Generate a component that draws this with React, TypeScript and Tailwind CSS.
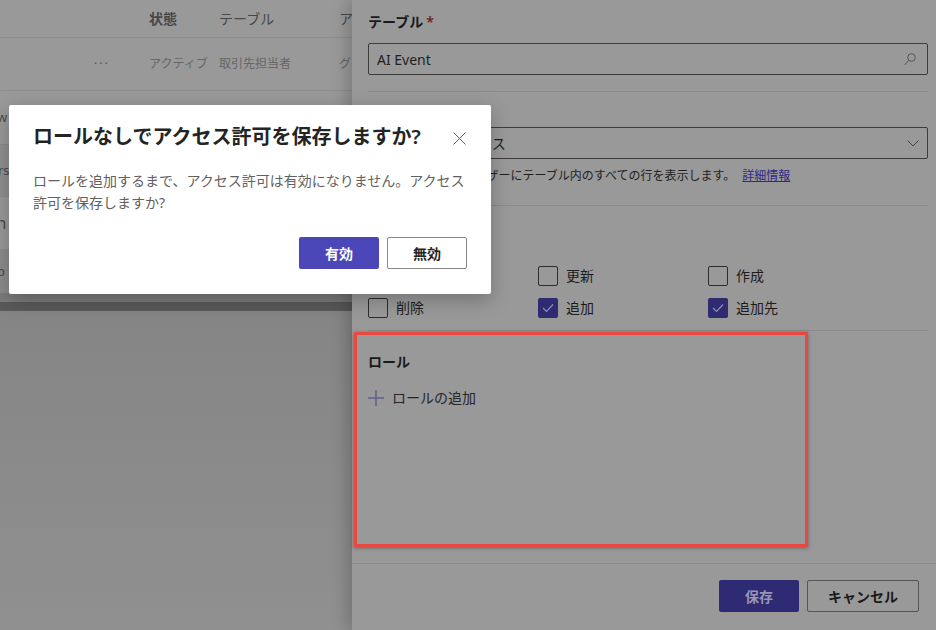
import React from "react";

// Screen behind the modal is drawn with its dimmed colours directly.

function Checkbox({ label, checked }: { label: string; checked?: boolean }) {
  return (
    <div className="flex items-center w-[170px]">
      <span
        className={`w-[20px] h-[20px] rounded-[2px] flex items-center justify-center ${
          checked ? "bg-[#2f2b70]" : "border border-[#2c2c2c]"
        }`}
      >
        {checked && (
          <svg width="12" height="10" viewBox="0 0 12 10">
            <polyline
              points="1,5 4.5,8.5 11,1.5"
              fill="none"
              stroke="#8f8db8"
              strokeWidth="1.2"
            />
          </svg>
        )}
      </span>
      <span className="ml-[8px] text-[14px] leading-[20px] text-[#1c1c1c]">
        {label}
      </span>
    </div>
  );
}

function BackPage() {
  return (
    <div className="w-[352px] h-full shrink-0 flex flex-col bg-[#999999] overflow-hidden">
      {/* Header */}
      <div className="h-[38px] flex items-center border-b border-[#8d8d8d] text-[14px] text-[#474747] shrink-0 whitespace-nowrap">
        <div className="w-[149px] shrink-0" />
        <div className="w-[70px] shrink-0 font-semibold">状態</div>
        <div className="w-[120px] shrink-0">テーブル</div>
        <div className="shrink-0">ア</div>
      </div>
      {/* Row */}
      <div className="h-[53px] flex items-center border-b border-[#8d8d8d] text-[12px] text-[#666666] shrink-0 whitespace-nowrap">
        <div className="w-[149px] shrink-0 pl-[94px] tracking-[2px] text-[#555]">···</div>
        <div className="w-[70px] shrink-0">アクティブ</div>
        <div className="w-[120px] shrink-0">取引先担当者</div>
        <div className="shrink-0">グ</div>
      </div>
      <div className="h-[53px] flex items-center text-[13px] text-[#4a4a4a] shrink-0">
        <span className="-ml-[3px]">w</span>
      </div>
      <div className="h-[53px] flex items-center bg-[#8f8f8f] border-y border-[#8a8a8a] text-[13px] text-[#4a4a4a] shrink-0">
        <span className="-ml-[2px]">rs</span>
      </div>
      <div className="h-[53px] flex items-center border-b border-[#8d8d8d] text-[17px] text-[#4a4a4a] shrink-0">
        <span className="-ml-[4px]">h</span>
      </div>
      <div className="h-[43px] flex items-center bg-[#8c8c8c] text-[13px] text-[#4a4a4a] shrink-0">
        <span className="-ml-[3px]">p</span>
      </div>
      <div className="h-[9px] bg-[#7b7b7b] shrink-0" />
      <div className="h-[9px] bg-[#5a5a5a] shrink-0" />
      <div className="flex-1 bg-linear-to-b from-[#858585] to-[#909090]" />
    </div>
  );
}

function SidePanel() {
  return (
    <div className="flex-1 h-full bg-[#999999] flex flex-col shadow-[-6px_0_14px_rgba(0,0,0,0.18)] z-0">
      <div className="pl-[16px] pr-[8px] pt-[12px] flex flex-col">
        <div className="text-[14px] leading-[20px] font-semibold text-[#1a1a1a]">
          テーブル<span className="ml-[3px] text-[#6e1f22]">*</span>
        </div>
        <div className="mt-[11px] h-[32px] border border-[#3c3c3c] rounded-[2px] flex items-center justify-between px-[8px]">
          <span className="text-[14px] text-[#1f1f1f]">AI Event</span>
          <svg width="12" height="13" viewBox="0 0 12 13" className="mr-[3px]">
            <circle cx="7.5" cy="4.5" r="3.8" fill="none" stroke="#555" strokeWidth="1" />
            <line x1="4.7" y1="7.4" x2="0.8" y2="11.8" stroke="#555" strokeWidth="1" />
          </svg>
        </div>
        <div className="mt-[16px] h-px bg-[#8a8a8a]" />
        <div className="mt-[10px] text-[14px] leading-[20px] font-semibold text-[#1a1a1a]">
          アクセスの種類
        </div>
        <div className="mt-[5px] h-[32px] border border-[#3c3c3c] rounded-[2px] flex items-center justify-between pl-[8px] pr-[8px]">
          <span className="text-[14px] text-[#1f1f1f]">グローバル アクセス</span>
          <svg width="12" height="7" viewBox="0 0 12 7">
            <polyline points="0.5,0.5 6,6 11.5,0.5" fill="none" stroke="#444" strokeWidth="1" />
          </svg>
        </div>
        <div className="mt-[9px] text-[12px] leading-[16px] text-[#1f1f1f]">
          サイトのすべてのユーザーにテーブル内のすべての行を表示します。{" "}
          <span className="ml-[4px] underline text-[#2b2a85]">詳細情報</span>
        </div>
        <div className="mt-[21px] h-px bg-[#8a8a8a]" />
        <div className="mt-[21px] text-[14px] leading-[20px] font-semibold text-[#1a1a1a]">
          アクセス許可
        </div>
        <div className="mt-[19px] flex">
          <Checkbox label="読み取り" checked />
          <Checkbox label="更新" />
          <Checkbox label="作成" />
        </div>
        <div className="mt-[12px] flex">
          <Checkbox label="削除" />
          <Checkbox label="追加" checked />
          <Checkbox label="追加先" checked />
        </div>
        <div className="mt-[12px] h-px bg-[#8a8a8a]" />
        {/* Highlighted roles section */}
        <div className="mt-px -ml-[14px] w-[454px] h-[215px] border-[3px] border-[#e8483f] shadow-[0_1px_4px_rgba(0,0,0,0.35)] pl-[11px] pt-[17px]">
          <div className="text-[14px] leading-[20px] font-semibold text-[#1a1a1a]">ロール</div>
          <div className="mt-[16px] flex items-center">
            <svg width="16" height="16" viewBox="0 0 16 16">
              <line x1="8" y1="0" x2="8" y2="16" stroke="#58578c" strokeWidth="1.3" />
              <line x1="0" y1="8" x2="16" y2="8" stroke="#58578c" strokeWidth="1.3" />
            </svg>
            <span className="ml-[8px] text-[14px] leading-[20px] text-[#262626]">
              ロールの追加
            </span>
          </div>
        </div>
      </div>
      <div className="mt-[16px] h-px bg-[#8a8a8a]" />
      <div className="flex justify-end pt-[16px] pr-[17px] gap-[8px]">
        <div className="w-[80px] h-[32px] rounded-[2px] bg-[#2e2a73] flex items-center justify-center text-[14px] font-semibold text-[#9797b5]">
          保存
        </div>
        <div className="w-[112px] h-[32px] rounded-[2px] border border-[#555555] flex items-center justify-center text-[14px] font-semibold text-[#1a1a1a]">
          キャンセル
        </div>
      </div>
    </div>
  );
}

function ConfirmDialog() {
  return (
    <div className="absolute left-[9px] top-[105px] w-[482px] h-[189px] bg-white rounded-[2px] shadow-[0_6px_20px_rgba(0,0,0,0.25)] z-10 pl-[24px] pr-[24px] pt-[18px]">
      <div className="flex items-center justify-between">
        <h2 className="text-[20px] leading-[28px] font-semibold text-[#242424]">
          ロールなしでアクセス許可を保存しますか?
        </h2>
        <svg width="13" height="13" viewBox="0 0 13 13" className="mr-[1px] mt-[2px]">
          <line x1="0.5" y1="0.5" x2="12.5" y2="12.5" stroke="#616161" strokeWidth="1" />
          <line x1="12.5" y1="0.5" x2="0.5" y2="12.5" stroke="#616161" strokeWidth="1" />
        </svg>
      </div>
      <p className="mt-[19px] w-[440px] text-[14px] leading-[22px] text-[#616161]">
        ロールを追加するまで、アクセス許可は有効になりません。アクセス許可を保存しますか?
      </p>
      <div className="mt-[23px] flex justify-end gap-[8px]">
        <button className="w-[80px] h-[32px] rounded-[2px] bg-[#4b47b9] text-white text-[14px] font-semibold">
          有効
        </button>
        <button className="w-[80px] h-[32px] rounded-[2px] border border-[#8a8886] bg-white text-[#242424] text-[14px] font-semibold">
          無効
        </button>
      </div>
    </div>
  );
}

export default function App() {
  return (
    <div className="relative w-[936px] h-[630px] overflow-hidden flex font-['Noto_Sans','Noto_Sans_CJK_JP',sans-serif]">
      <BackPage />
      <SidePanel />
      <ConfirmDialog />
    </div>
  );
}
